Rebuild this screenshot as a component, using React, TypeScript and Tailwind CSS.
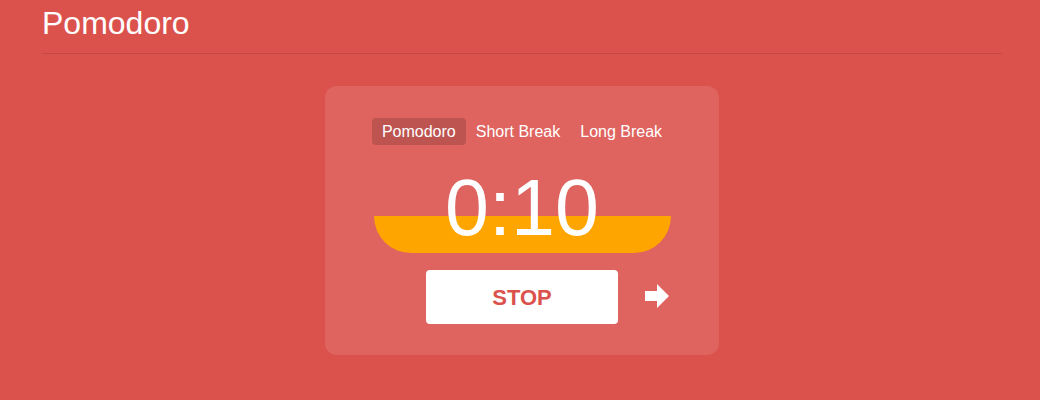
export default function App() {
  const tabs = ['Pomodoro', 'Short Break', 'Long Break'];

  return (
    <div className="h-[400px] w-full overflow-hidden bg-[#db524d] font-['Liberation_Sans',Arial,sans-serif] text-white">
      <header className="ml-[42px] w-[960px] border-b border-black/10">
        <h1 className="pt-[5px] pb-[11px] text-[32px] leading-[37px]">Pomodoro</h1>
      </header>

      <div className="ml-[42px] flex w-[960px] justify-center pt-[32px]">
        <div className="flex h-[269px] w-[394px] flex-col items-center rounded-xl bg-white/10 pt-[32px]">
          <div className="flex items-center">
            {tabs.map((t, i) => (
              <button
                key={t}
                className={`h-[27px] rounded px-[10px] text-[16px] leading-[27px] ${i === 0 ? 'bg-black/15' : ''}`}
              >
                {t}
              </button>
            ))}
          </div>

          <div className="relative mt-[18px] h-[90px] w-[297px]">
            <div className="absolute bottom-0 left-0 h-[37px] w-full rounded-b-[40px] bg-[#ffa500]" />
            <div className="relative text-center text-[79px] leading-[90px]">0:10</div>
          </div>

          <div className="relative mt-[17px] flex w-full justify-center">
            <button className="h-[54px] w-[192px] rounded bg-white text-[22px] font-bold text-[#db524d]">
              STOP
            </button>
            <svg
              className="absolute left-[320px] top-[14px]"
              width="24"
              height="24"
              viewBox="0 0 24 24"
              aria-hidden="true"
            >
              <path d="M0 7 H12 V0 L24 12 L12 24 V17 H0 Z" fill="#fff" />
            </svg>
          </div>
        </div>
      </div>
    </div>
  );
}
